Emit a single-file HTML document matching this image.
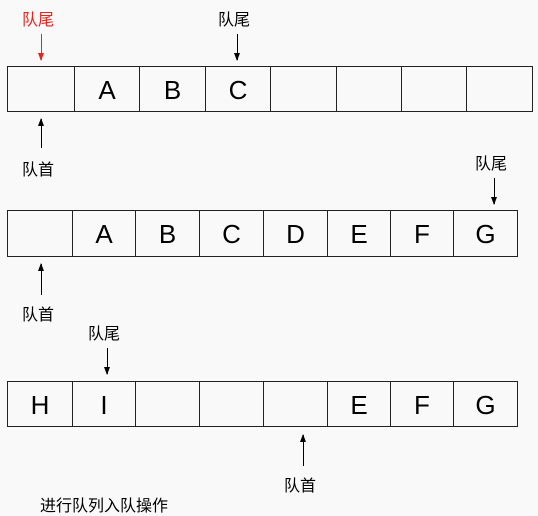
<!DOCTYPE html><html><head><meta charset="utf-8"><style>
body{margin:0;width:538px;height:502px;background:#f9f9f9;position:relative;overflow:hidden;font-family:"Liberation Sans","Noto Sans CJK SC",sans-serif}
.c{position:absolute;border:1px solid #222;box-sizing:border-box;text-align:center;font-size:26px;color:#000}
.t{position:absolute;font-size:16px;color:#000;white-space:nowrap}
.v{position:absolute;width:1px;background:#000}
.dn:after{content:"";position:absolute;left:-3px;bottom:-1px;border-left:3.5px solid transparent;border-right:3.5px solid transparent;border-top:8px solid currentColor}
.up:after{content:"";position:absolute;left:-3px;top:-1px;border-left:3.5px solid transparent;border-right:3.5px solid transparent;border-bottom:8px solid currentColor}
</style></head><body>
<div id="r"></div>
<script></script>
<!-- row1 -->
<div class="c" style="left:7px;top:66px;width:68px;height:46px"></div>
<div class="c" style="left:74px;top:66px;width:66px;height:46px;line-height:46px">A</div>
<div class="c" style="left:139px;top:66px;width:67px;height:46px;line-height:46px">B</div>
<div class="c" style="left:205px;top:66px;width:66px;height:46px;line-height:46px">C</div>
<div class="c" style="left:270px;top:66px;width:67px;height:46px"></div>
<div class="c" style="left:336px;top:66px;width:66px;height:46px"></div>
<div class="c" style="left:401px;top:66px;width:66px;height:46px"></div>
<div class="c" style="left:466px;top:66px;width:67px;height:46px"></div>
<div class="t" style="left:22px;top:6px;color:#e8231a">队尾</div>
<div class="v dn" style="left:41px;top:34px;height:26px;background:#e8231a;color:#e8231a"></div>
<div class="t" style="left:218px;top:6px">队尾</div>
<div class="v dn" style="left:237px;top:34px;height:26px;color:#000"></div>
<div class="v up" style="left:41px;top:119px;height:29px;color:#000"></div>
<div class="t" style="left:22px;top:156px">队首</div>
<!-- row2 -->
<div class="c" style="left:7px;top:210px;width:66px;height:47px"></div>
<div class="c" style="left:72px;top:210px;width:64px;height:47px;line-height:47px">A</div>
<div class="c" style="left:135px;top:210px;width:65px;height:47px;line-height:47px">B</div>
<div class="c" style="left:199px;top:210px;width:65px;height:47px;line-height:47px">C</div>
<div class="c" style="left:263px;top:210px;width:65px;height:47px;line-height:47px">D</div>
<div class="c" style="left:327px;top:210px;width:64px;height:47px;line-height:47px">E</div>
<div class="c" style="left:390px;top:210px;width:64px;height:47px;line-height:47px">F</div>
<div class="c" style="left:453px;top:210px;width:65px;height:47px;line-height:47px">G</div>
<div class="t" style="left:475px;top:150px">队尾</div>
<div class="v dn" style="left:494px;top:178px;height:26px;color:#000"></div>
<div class="v up" style="left:41px;top:264px;height:31px;color:#000"></div>
<div class="t" style="left:22px;top:301px">队首</div>
<!-- row3 -->
<div class="c" style="left:7px;top:381px;width:66px;height:46px;line-height:46px">H</div>
<div class="c" style="left:72px;top:381px;width:64px;height:46px;line-height:46px">I</div>
<div class="c" style="left:135px;top:381px;width:65px;height:46px"></div>
<div class="c" style="left:199px;top:381px;width:65px;height:46px"></div>
<div class="c" style="left:263px;top:381px;width:65px;height:46px"></div>
<div class="c" style="left:327px;top:381px;width:64px;height:46px;line-height:46px">E</div>
<div class="c" style="left:390px;top:381px;width:64px;height:46px;line-height:46px">F</div>
<div class="c" style="left:453px;top:381px;width:65px;height:46px;line-height:46px">G</div>
<div class="t" style="left:88px;top:320px">队尾</div>
<div class="v dn" style="left:107px;top:348px;height:26px;color:#000"></div>
<div class="v up" style="left:303px;top:435px;height:31px;color:#000"></div>
<div class="t" style="left:284px;top:472px">队首</div>
<div class="t" style="left:40px;top:492px;font-size:16px">进行队列入队操作</div>
</body></html>
